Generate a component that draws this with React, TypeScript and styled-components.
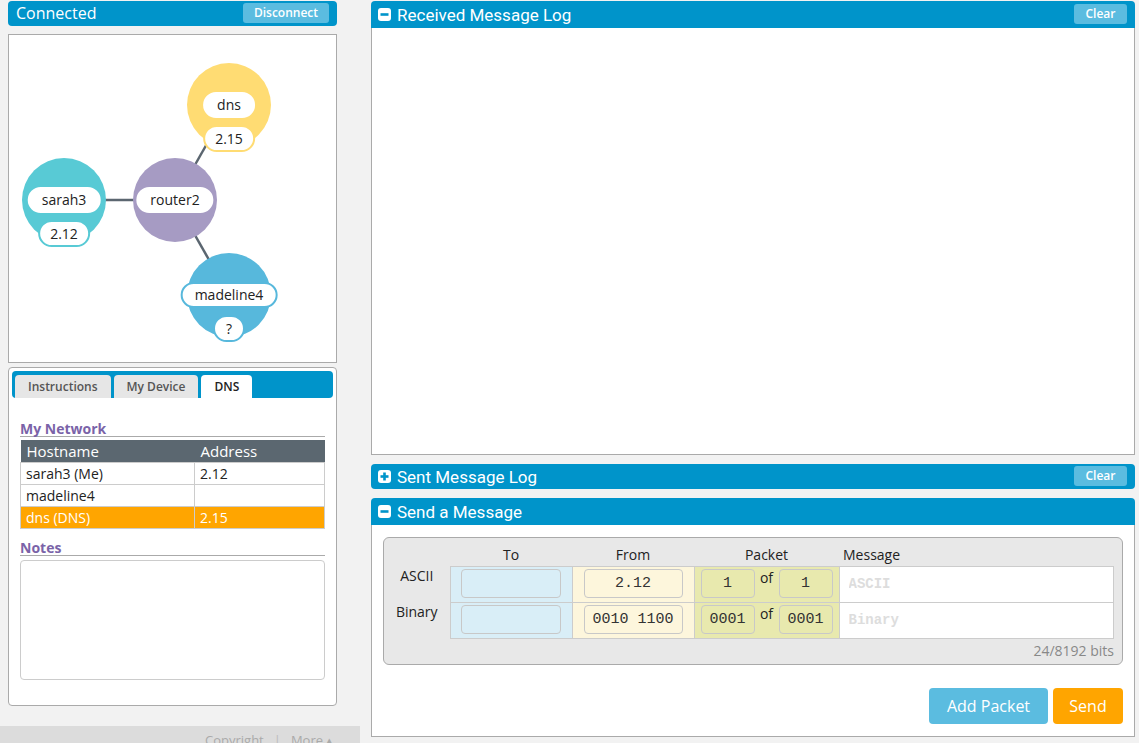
import React from "react";
import styled, { createGlobalStyle, css } from "styled-components";

const BLUE = "#0094ca";
const LIGHT_BLUE = "#5bbce0";
const ORANGE = "#ffa500";

const GlobalStyle = createGlobalStyle`
  html, body {
    margin: 0;
    background: #f2f2f2;
    font-family: "Open Sans", "Liberation Sans", sans-serif;
    color: #222;
  }
  * { box-sizing: border-box; }
`;

type Node = {
  id: string;
  x: number;
  y: number;
  color: string;
  name: string;
  address?: string;
  ring?: boolean;
};

const nodes: Node[] = [
  { id: "dns", x: 220, y: 70, color: "#ffdc73", name: "dns", address: "2.15" },
  { id: "router", x: 166, y: 165, color: "#a69bc3", name: "router2" },
  { id: "sarah", x: 55, y: 165, color: "#58cad5", name: "sarah3", address: "2.12" },
  { id: "madeline", x: 220, y: 260, color: "#57b8dc", name: "madeline4", address: "?", ring: true },
];

const edges: [string, string][] = [
  ["router", "dns"],
  ["router", "sarah"],
  ["router", "madeline"],
];

const hosts = [
  { name: "sarah3 (Me)", address: "2.12", highlight: false },
  { name: "madeline4", address: "", highlight: false },
  { name: "dns (DNS)", address: "2.15", highlight: true },
];

export default function App() {
  const byId = Object.fromEntries(nodes.map((n) => [n.id, n]));
  return (
    <>
      <GlobalStyle />
      <Page>
        <LeftSide>
          <LeftColumn>
            <TitleBar>
              <TitleText>Connected</TitleText>
              <SmallButton $wide>Disconnect</SmallButton>
            </TitleBar>
            <Diagram>
              <Edges width="327" height="327">
                {edges.map(([a, b]) => (
                  <line
                    key={a + b}
                    x1={byId[a].x}
                    y1={byId[a].y}
                    x2={byId[b].x}
                    y2={byId[b].y}
                    stroke="#5b6670"
                    strokeWidth="2.5"
                  />
                ))}
              </Edges>
              {nodes.map((n) => (
                <NodeCircle key={n.id} $x={n.x} $y={n.y} $color={n.color}>
                  <NamePill $ring={n.ring ? n.color : undefined}>{n.name}</NamePill>
                  {n.address && <AddressPill $ring={n.color}>{n.address}</AddressPill>}
                </NodeCircle>
              ))}
            </Diagram>
            <TabsPanel>
              <TabBar>
                <Tab>Instructions</Tab>
                <Tab>My Device</Tab>
                <Tab $active>DNS</Tab>
              </TabBar>
              <TabBody>
                <SectionHeading>My Network</SectionHeading>
                <HostTable>
                  <thead>
                    <tr>
                      <HostHead style={{ width: 174 }}>Hostname</HostHead>
                      <HostHead>Address</HostHead>
                    </tr>
                  </thead>
                  <tbody>
                    {hosts.map((h) => (
                      <HostRow key={h.name} $highlight={h.highlight}>
                        <HostCell>{h.name}</HostCell>
                        <HostCell>{h.address}</HostCell>
                      </HostRow>
                    ))}
                  </tbody>
                </HostTable>
                <SectionHeading $gap>Notes</SectionHeading>
                <Notes />
              </TabBody>
            </TabsPanel>
          </LeftColumn>
          <Footer>
            <FooterLink>Copyright</FooterLink>
            <FooterSep>|</FooterSep>
            <FooterLink>More ▴</FooterLink>
          </Footer>
        </LeftSide>

        <RightSide>
          <PanelHeader $shape="top">
            <PanelTitle>
              <ToggleIcon open />
              Received Message Log
            </PanelTitle>
            <SmallButton>Clear</SmallButton>
          </PanelHeader>
          <LogBody />

          <PanelHeader $shape="all" $gap>
            <PanelTitle>
              <ToggleIcon />
              Sent Message Log
            </PanelTitle>
            <SmallButton>Clear</SmallButton>
          </PanelHeader>

          <PanelHeader $shape="top" $gap>
            <PanelTitle>
              <ToggleIcon open />
              Send a Message
            </PanelTitle>
          </PanelHeader>
          <SendBody>
            <Composer>
              <PacketTable>
                <thead>
                  <tr>
                    <ColHead style={{ width: 66 }} />
                    <ColHead style={{ width: 122 }}>To</ColHead>
                    <ColHead style={{ width: 122 }}>From</ColHead>
                    <ColHead style={{ width: 145 }}>Packet</ColHead>
                    <ColHead $left>Message</ColHead>
                  </tr>
                </thead>
                <tbody>
                  {[
                    { label: "ASCII", from: "2.12", n: "1", of: "1" },
                    { label: "Binary", from: "0010 1100", n: "0001", of: "0001" },
                  ].map((r) => (
                    <tr key={r.label}>
                      <RowLabel>{r.label}</RowLabel>
                      <Cell $tone="#d9eef7">
                        <Field $tone="#d9eef7" $width={100} />
                      </Cell>
                      <Cell $tone="#fdf6dc">
                        <Field $tone="#fdf6dc" $width={99}>{r.from}</Field>
                      </Cell>
                      <Cell $tone="#e8e9ae">
                        <PacketGroup>
                          <Field $tone="#e8e9ae" $width={54}>{r.n}</Field>
                          <OfText>of</OfText>
                          <Field $tone="#e8e9ae" $width={54}>{r.of}</Field>
                        </PacketGroup>
                      </Cell>
                      <Cell $tone="#ffffff">
                        <MessageInput placeholder={r.label} />
                      </Cell>
                    </tr>
                  ))}
                </tbody>
              </PacketTable>
              <BitCount>24/8192 bits</BitCount>
            </Composer>
            <Actions>
              <ActionButton $color={LIGHT_BLUE} $width={119}>Add Packet</ActionButton>
              <ActionButton $color={ORANGE} $width={70}>Send</ActionButton>
            </Actions>
          </SendBody>
        </RightSide>
      </Page>
    </>
  );
}

function ToggleIcon({ open }: { open?: boolean }) {
  return (
    <svg width="13" height="13" viewBox="0 0 13 13">
      <rect x="0" y="0" width="13" height="13" rx="3" fill="#fff" />
      <rect x="2.5" y="5.2" width="8" height="2.6" fill={BLUE} />
      {!open && <rect x="5.2" y="2.5" width="2.6" height="8" fill={BLUE} />}
    </svg>
  );
}

const Page = styled.div`
  display: flex;
  align-items: flex-start;
  padding-top: 1px;
  height: 743px;
  overflow: hidden;
`;

const LeftSide = styled.div`
  width: 360px;
  display: flex;
  flex-direction: column;
`;

const LeftColumn = styled.div`
  width: 329px;
  margin-left: 8px;
  display: flex;
  flex-direction: column;
`;

const TitleBar = styled.div`
  height: 25px;
  background: ${BLUE};
  border-radius: 4px;
  display: flex;
  align-items: center;
  justify-content: space-between;
  padding: 0 8px 0 8px;
`;

const TitleText = styled.span`
  color: #fff;
  font-size: 16px;
  line-height: 1;
  margin-top: -2px;
`;

const SmallButton = styled.button<{ $wide?: boolean }>`
  height: 20px;
  width: ${(p) => (p.$wide ? "86px" : "53px")};
  border: none;
  border-radius: 3px;
  background: ${LIGHT_BLUE};
  color: #fff;
  font-family: "Open Sans", sans-serif;
  font-size: 12px;
  font-weight: 600;
  padding: 0;
  margin-top: -2px;
`;

const Diagram = styled.div`
  position: relative;
  margin-top: 8px;
  height: 329px;
  background: #fff;
  border: 1px solid #aaa;
`;

const Edges = styled.svg`
  position: absolute;
  left: 0;
  top: 0;
`;

const NodeCircle = styled.div<{ $x: number; $y: number; $color: string }>`
  position: absolute;
  left: ${(p) => p.$x - 42}px;
  top: ${(p) => p.$y - 42}px;
  width: 84px;
  height: 84px;
  border-radius: 50%;
  background: ${(p) => p.$color};
`;

const pill = css`
  position: absolute;
  left: 50%;
  transform: translateX(-50%);
  background: #fff;
  border-radius: 14px;
  font-size: 14px;
  white-space: nowrap;
  display: flex;
  align-items: center;
  justify-content: center;
  color: #222;
  padding-bottom: 1px;
`;

const NamePill = styled.div<{ $ring?: string }>`
  ${pill};
  top: 29px;
  height: 26px;
  padding-left: 12px;
  padding-right: 12px;
  border: 2px solid ${(p) => p.$ring ?? "#fff"};
`;

const AddressPill = styled.div<{ $ring: string }>`
  ${pill};
  top: 62px;
  height: 27px;
  padding-left: 10px;
  padding-right: 10px;
  min-width: 32px;
  border: 2px solid ${(p) => p.$ring};
`;

const TabsPanel = styled.div`
  margin-top: 4px;
  height: 339px;
  background: #fff;
  border: 1px solid #aaa;
  border-radius: 4px;
  padding: 3px;
`;

const TabBar = styled.div`
  height: 27px;
  background: ${BLUE};
  border-radius: 4px;
  display: flex;
  align-items: flex-end;
  gap: 3px;
  padding-left: 3px;
`;

const Tab = styled.div<{ $active?: boolean }>`
  height: ${(p) => (p.$active ? "25px" : "23px")};
  margin-bottom: ${(p) => (p.$active ? "-2px" : "0")};
  padding: 0 13px;
  background: ${(p) => (p.$active ? "#fff" : "#e6e6e6")};
  border-radius: 4px 4px 0 0;
  font-size: 12px;
  font-weight: 600;
  color: ${(p) => (p.$active ? "#222" : "#555")};
  display: flex;
  align-items: center;
  padding-bottom: ${(p) => (p.$active ? "2px" : "0")};
`;

const TabBody = styled.div`
  padding: 23px 8px 0 8px;
`;

const SectionHeading = styled.div<{ $gap?: boolean }>`
  color: #7a63a8;
  font-size: 14px;
  font-weight: 700;
  line-height: 15px;
  border-bottom: 1px solid #aaa;
  margin-top: ${(p) => (p.$gap ? "11px" : "0")};
  margin-bottom: 3px;
`;

const HostTable = styled.table`
  width: 100%;
  border-collapse: collapse;
  font-size: 14px;
`;

const HostHead = styled.th`
  background: #5b6770;
  color: #fff;
  font-weight: 400;
  font-size: 15px;
  text-align: left;
  height: 22px;
  padding: 0 6px;
`;

const HostRow = styled.tr<{ $highlight?: boolean }>`
  background: ${(p) => (p.$highlight ? ORANGE : "#fff")};
  color: ${(p) => (p.$highlight ? "#fff" : "#222")};
`;

const HostCell = styled.td`
  height: 22px;
  padding: 0 5px;
  border: 1px solid #ccc;
  font-size: 14px;
`;

const Notes = styled.textarea`
  display: block;
  width: 100%;
  height: 120px;
  margin-top: 4px;
  border: 1px solid #ccc;
  border-radius: 4px;
  resize: none;
`;

const Footer = styled.div`
  margin-top: 20px;
  height: 30px;
  background: #dcdcdc;
  display: flex;
  gap: 10px;
  padding: 5px 0 0 205px;
  font-size: 13px;
  color: #aaa;
`;

const FooterLink = styled.span``;
const FooterSep = styled.span`
  color: #bbb;
`;

const RightSide = styled.div`
  width: 764px;
  margin-left: 11px;
  display: flex;
  flex-direction: column;
`;

const PanelHeader = styled.div<{ $shape: "top" | "all"; $gap?: boolean }>`
  height: ${(p) => (p.$shape === "all" ? "25px" : "27px")};
  margin-top: ${(p) => (p.$gap ? "9px" : "0")};
  background: ${BLUE};
  border-radius: ${(p) => (p.$shape === "all" ? "4px" : "4px 4px 0 0")};
  display: flex;
  align-items: center;
  justify-content: space-between;
  padding: 0 8px 0 7px;
`;

const PanelTitle = styled.div`
  display: flex;
  align-items: center;
  gap: 6px;
  color: #fff;
  font-family: Roboto, "Open Sans", sans-serif;
  font-size: 17px;
`;

const LogBody = styled.div`
  height: 427px;
  background: #fff;
  border: 1px solid #aaa;
  border-top: none;
`;

const SendBody = styled.div`
  height: 212px;
  background: #fff;
  border: 1px solid #aaa;
  border-top: none;
  padding: 12px 11px 0 11px;
`;

const Composer = styled.div`
  height: 128px;
  background: #e8e8e8;
  border: 1px solid #aaa;
  border-radius: 6px;
  padding: 6px 8px 0 0;
`;

const PacketTable = styled.table`
  width: 100%;
  border-collapse: collapse;
  table-layout: fixed;
`;

const ColHead = styled.th<{ $left?: boolean }>`
  font-weight: 400;
  font-size: 14px;
  height: 22px;
  text-align: ${(p) => (p.$left ? "left" : "center")};
  padding: 0 ${(p) => (p.$left ? "4px" : "0")};
  color: #222;
`;

const RowLabel = styled.th`
  font-weight: 400;
  font-size: 14px;
  vertical-align: top;
  padding-top: 0;
  color: #222;
`;

const Cell = styled.td<{ $tone: string }>`
  background: ${(p) => p.$tone};
  border: 1px solid #ccc;
  height: 36px;
  padding: 0;
  text-align: center;
  vertical-align: middle;
`;

const Field = styled.div<{ $tone: string; $width: number }>`
  display: inline-flex;
  align-items: center;
  justify-content: center;
  width: ${(p) => p.$width}px;
  height: 29px;
  margin-top: -1px;
  background: ${(p) => p.$tone};
  border: 1px solid #c8c8c8;
  border-radius: 4px;
  font-family: "Liberation Mono", monospace;
  font-size: 15px;
  color: #333;
  vertical-align: middle;
`;

const PacketGroup = styled.div`
  display: flex;
  align-items: flex-start;
  justify-content: center;
  gap: 4px;
`;

const OfText = styled.span`
  font-size: 14px;
  line-height: 16px;
  margin-top: 0;
  width: 16px;
  color: #222;
`;

const MessageInput = styled.input`
  width: 100%;
  height: 34px;
  border: none;
  background: transparent;
  padding: 0 9px;
  font-family: "Liberation Mono", monospace;
  font-size: 14px;
  font-weight: 700;
  outline: none;
  &::placeholder {
    color: #ddd;
  }
`;

const BitCount = styled.div`
  text-align: right;
  font-size: 14px;
  color: #888;
  margin-top: 2px;
`;

const Actions = styled.div`
  margin-top: 23px;
  display: flex;
  justify-content: flex-end;
  gap: 5px;
`;

const ActionButton = styled.button<{ $color: string; $width: number }>`
  width: ${(p) => p.$width}px;
  height: 36px;
  border: none;
  border-radius: 4px;
  background: ${(p) => p.$color};
  color: #fff;
  font-family: "Open Sans", sans-serif;
  font-size: 16px;
  padding: 0;
`;
